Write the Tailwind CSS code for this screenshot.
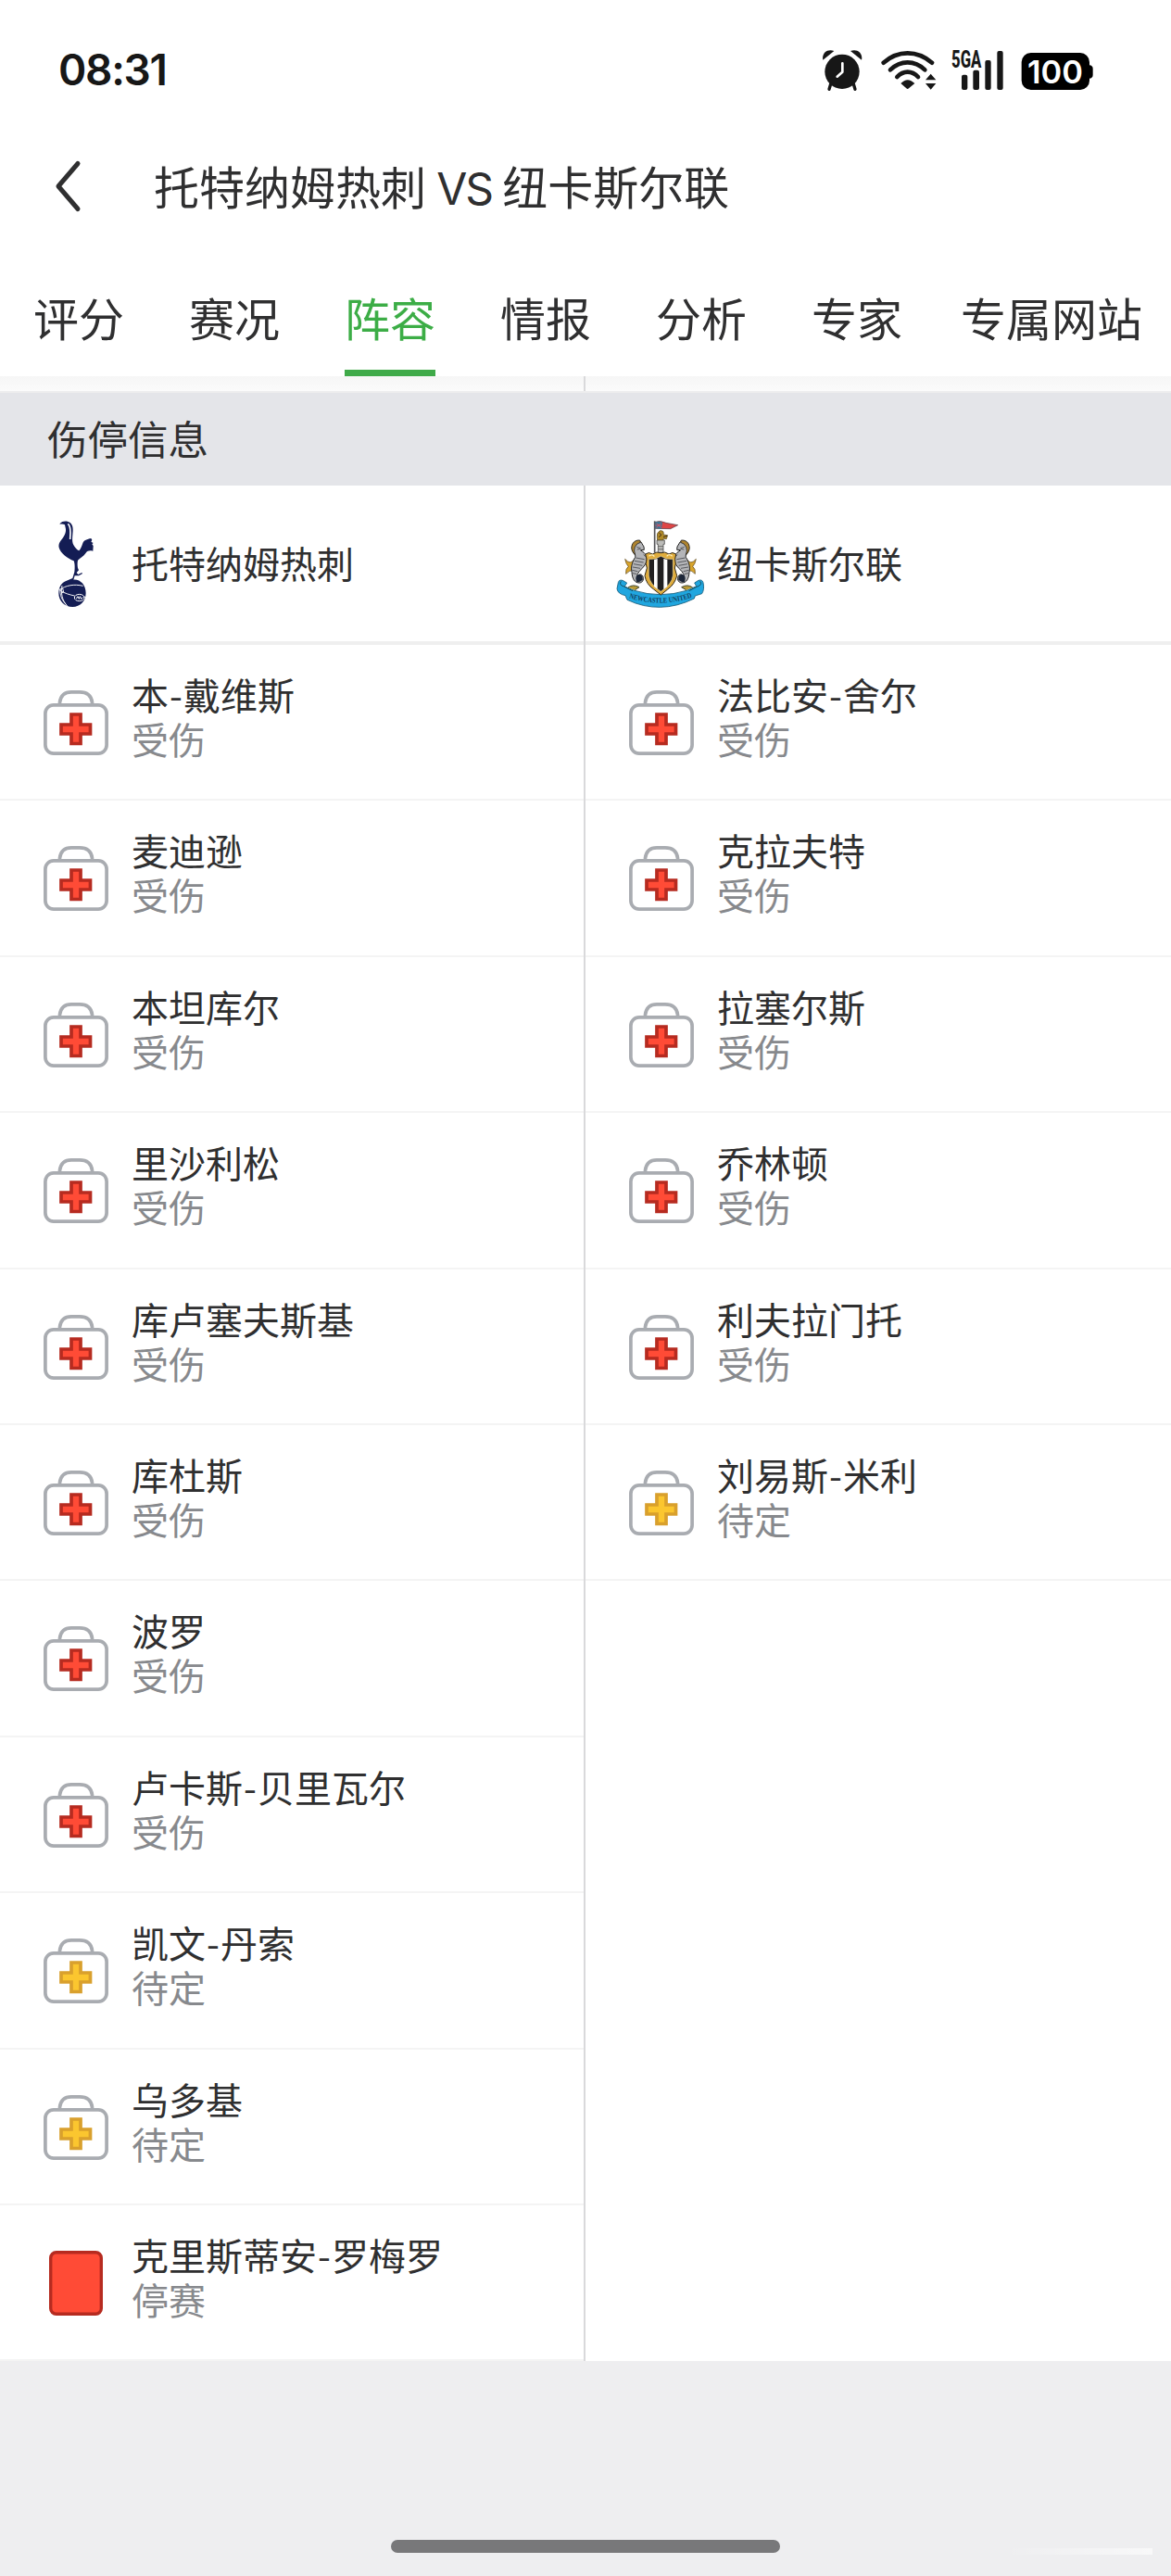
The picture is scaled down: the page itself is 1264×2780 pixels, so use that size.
<!DOCTYPE html>
<html lang="zh-CN">
<head>
  <meta charset="UTF-8" />
  <meta name="viewport" content="width=device-width, initial-scale=1.0"/>
  <title>托特纳姆热刺 VS 纽卡斯尔联</title>
  <script src="https://cdn.jsdelivr.net/npm/@tailwindcss/browser@4"></script>
</head>
<body class="bg-[#eeeef0] w-[1264px] h-[2780px] overflow-hidden flex flex-col text-[#2f2f30] font-['Noto_Sans_CJK_SC',sans-serif] font-normal">
  <!-- Phone status bar -->
  <div class="h-[150px] shrink-0 bg-white pl-[63px] pr-[84px] flex items-center justify-between text-[#171717]">
    <span class="font-[Inter,sans-serif] font-semibold text-[46px] leading-none tracking-[-1.300px]">08:31</span>
    <div class="flex items-center pt-[2px]">
      <!-- alarm -->
      <svg class="w-[44px] h-[46px]" viewBox="77 69 132 138" fill="currentColor">
        <circle cx="143" cy="142" r="56"/>
        <path d="M81 104C76 82 96 66 117 75Z"/><path d="M206 104C211 82 191 66 170 75Z"/>
        <path d="M106 182l-5 17M180 182l5 17" stroke="currentColor" stroke-width="10" stroke-linecap="round"/>
        <path d="M144 115V143L127 158" fill="none" stroke="#fff" stroke-width="8" stroke-linecap="round" stroke-linejoin="round"/>
      </svg>
      <!-- wifi -->
      <svg class="w-[60px] h-[46px] ml-[20px]" viewBox="269 69 180 138">
        <g fill="none" stroke="currentColor" stroke-width="14" stroke-linecap="round">
          <path d="M277 113Q312 82 355 82T434 113"/>
          <path d="M299 136Q324 112 355 112T411 136"/>
          <path d="M321 159Q336 143 355 143T389 159"/>
        </g>
        <path d="M333 180Q355 157 378 180L359 196Q355 200 351 196Z" fill="currentColor"/>
        <path d="M413 169L430 149L447 169ZM413 180L430 200L447 180Z" fill="currentColor"/>
      </svg>
      <!-- mobile signal -->
      <svg class="w-[58px] h-[46px] ml-[15px] overflow-visible" viewBox="494 69 174 138" fill="currentColor">
        <text x="497" y="128" textLength="97" lengthAdjust="spacingAndGlyphs" font-family="Roboto" font-weight="800" font-size="78">5GA</text>
        <rect x="530" y="152" width="19" height="49" rx="6"/>
        <rect x="567" y="137" width="20" height="64" rx="6"/>
        <rect x="606" y="105" width="19" height="96" rx="6"/>
        <rect x="645" y="75" width="19" height="126" rx="6"/>
      </svg>
      <!-- battery -->
      <svg class="w-[78px] h-[46px] ml-[18px]" viewBox="724 69 234 138">
        <rect x="726" y="81" width="220" height="120" rx="30" fill="#000"/>
        <path d="M945 121q12 1 12 12v19q0 11-12 12Z" fill="#000"/>
        <text x="745" y="181" textLength="180" lengthAdjust="spacingAndGlyphs" font-family="Inter" font-weight="600" font-size="104" fill="#fff">100</text>
      </svg>
    </div>
  </div>

  <!-- Match title -->
  <header class="h-[106px] shrink-0 bg-white flex items-center pl-[58px]">
    <svg class="w-[30px] h-[58px] -mt-[4px]" viewBox="0 0 30 58" fill="none" stroke="#2f2f30" stroke-width="5" stroke-linecap="round" stroke-linejoin="round">
      <path d="M26 4.500L5 29L26 53.500"/>
    </svg>
    <h1 class="ml-[78px] -mt-[2px] text-[49px] leading-[60px] whitespace-nowrap">托特纳姆热刺<span class="font-[Inter,sans-serif] text-[48px] tracking-[-2.200px]"> VS </span>纽卡斯尔联</h1>
  </header>

  <!-- Tabs -->
  <nav class="h-[150px] shrink-0 bg-white flex pl-[36px] pr-[31px] text-[49px] leading-[60px] whitespace-nowrap">
    <a class="mr-[70px] pt-[56px]">评分</a>
    <a class="mr-[70px] pt-[56px]">赛况</a>
    <a class="mr-[70px] pt-[56px] border-b-[7px] border-[#3faa49] text-[#3cad46]">阵容</a>
    <a class="mr-[70px] pt-[56px]">情报</a>
    <a class="mr-[70px] pt-[56px]">分析</a>
    <a class="mr-[63px] pt-[56px]">专家</a>
    <a class="pt-[56px]">专属网站</a>
  </nav>

  <!-- Strip between tabs and section title -->
  <div class="h-[18px] shrink-0 flex bg-linear-to-b from-[#f6f6f6] to-[#fbfbfb] border-b-2 border-[#ededee]">
    <div class="w-[632px] border-r-2 border-[#d9d9db]"></div>
  </div>
  <h2 class="h-[100px] shrink-0 bg-[#e4e5e9] pl-[51px] text-[43.500px] leading-[97px]">伤停信息</h2>

  <!-- Injuries and suspensions -->
  <main class="h-[2024px] shrink-0 bg-white flex text-[40px] leading-[48px]">
    <section class="w-[632px] border-r-2 border-[#d9d9db]">
      <div class="h-[172px] pl-[33px] flex items-center border-b-4 border-[#efefef]">
        <!-- Tottenham crest -->
        <svg class="w-[96px] h-[96px] mr-[13px] mt-[2px]" viewBox="9 63 288 288">
          <path fill="#141d54" d="M104 75C110 68 122 66 130 69C142 72 147 84 146 98C145 117 142 131 148 144C153 154 160 160 166 163C171 158 175 147 178 139C182 128 192 126 205 123L208 128L205 134L212 138L208 142L212 147L211 164C200 162 193 163 188 170C181 181 168 186 162 194C160 203 161 212 162 219L165 226L158 234L163 240L175 234L177 237L165 244H152L148 257C170 255 188 274 188 300C188 326 170 345 145 345C119 345 100 326 100 301C100 280 110 267 122 262L145 252L151 232C153 218 152 203 149 196C129 188 106 171 101 153C98 137 107 131 115 119C121 110 124 101 123 93L120 79C115 76 110 76 104 77Z"/>
          <path fill="none" stroke="#fff" stroke-width="5" d="M130 76C137 82 138 92 138 105L137 126"/>
          <path fill="none" stroke="#fff" stroke-width="2.800" d="M103 290C122 275 151 270 179 277M103 291C119 301 137 306 152 309M111 276C106 298 111 325 128 342M105 285C102 306 112 325 125 338M113 285L116 297L108 301M181 312L187 313"/>
          <ellipse cx="167" cy="315" rx="16" ry="11" fill="none" stroke="#fff" stroke-width="3"/>
          <path fill="none" stroke="#fff" stroke-width="3" d="M157 318L162 311L166 319L169 311L173 319L178 314"/>
        </svg>
        <span class="-mt-[3px]">托特纳姆热刺</span>
      </div>
      <ul id="home-list"></ul>
    </section>
    <section class="w-[632px]">
      <div class="h-[172px] pl-[33px] flex items-center border-b-4 border-[#efefef]">
        <!-- Newcastle crest -->
        <svg class="w-[96px] h-[96px] mr-[13px] mt-[2px]" viewBox="45 63 288 288">
          <defs>
            <path id="motto" d="M84 315Q188 350 297 312"/>
            <g id="seahorse">
              <path d="M104 190Q92 211 74 190Q77 207 85 214Q75 221 77 238Q88 225 103 227Z" fill="#d9a52c" stroke="#55401a" stroke-width="2"/>
              <path d="M126 135C109 124 95 139 97 158C98 169 110 173 107 184C98 198 92 215 96 232C97 253 105 268 121 267C133 266 137 252 130 243C124 236 114 241 115 250C108 241 122 228 133 216C148 200 147 179 135 169L124 161L136 160L135 150Z" fill="#b4b5b8" stroke="#262626" stroke-width="3"/>
              <path d="M122 129C102 127 91 145 97 163Q101 172 107 177Q101 161 106 151Q111 139 124 136Z" fill="#ae8430" stroke="#222" stroke-width="2.500"/>
              <path d="M112 151l13 4M113 159l10-2M109 186l28 5M105 196l29 5M102 206l28 5M99 216l24 4M97 226l18 4M98 236l13 2M134 176l10 8" stroke="#45464a" stroke-width="2.500" fill="none"/>
              <path d="M109 254Q108 241 121 239Q133 243 131 256Q123 269 111 263Z" fill="#1c2638"/>
            </g>
          </defs>
          <path d="M52 266Q54 256 66 259L80 267L73 279L105 292Q188 318 273 292L305 278L299 267L312 259Q324 255 327 266Q332 288 323 302L301 309L298 318Q187 372 81 322L75 308Q50 303 48 286Z" fill="#20a6df" stroke="#175c79" stroke-width="2.500"/>
          <path d="M61 262Q53 274 71 279L99 293M317 262Q326 274 306 280L281 293" fill="none" stroke="#164e60" stroke-width="3"/>
          <path d="M84 282Q100 270 120 281L106 290M293 282Q276 270 257 281L272 290" fill="#b99a35" stroke="#3d422b" stroke-width="3"/>
          <path d="M170 67V170" stroke="#535358" stroke-width="5"/>
          <path d="M172 70Q188 64 207 73L245 80Q231 87 221 92L172 91Z" fill="#df4545" stroke="#4b3440" stroke-width="2"/>
          <path d="M172 70Q184 66 195 71L192 92L172 91Z" fill="#377895"/>
          <path d="M176 73l15 16M190 73l-14 16M172 81h21" stroke="#ce5266" stroke-width="3"/>
          <path d="M178 119Q175 106 187 98Q202 97 198 111L212 113L208 125L199 124L197 130H179Z" fill="#b18b28" stroke="#4f401c" stroke-width="2"/>
          <path d="M184 105l8 7-9 7M198 119l12-4" stroke="#412c17" stroke-width="3" fill="none"/>
          <path d="M177 129h25v13h-4v28h-17v-28h-4Z" fill="#bcbcb9" stroke="#343434" stroke-width="2"/>
          <path d="M181 149h17M181 158h17" stroke="#444" stroke-width="2"/>
          <use href="#seahorse"/>
          <use href="#seahorse" transform="matrix(-1 0 0 1 378 0)"/>
          <path d="M140 174Q151 165 163 174Q177 164 190 170Q203 164 216 174Q228 165 239 174L236 190Q240 207 235 219L242 244Q235 272 212 288L190 306L167 288Q143 272 138 244L145 219Q139 206 144 190Z" fill="#e0ad3d" stroke="#31291c" stroke-width="3"/>
          <path d="M151 190Q173 193 190 181Q209 193 229 190V243Q226 271 190 295Q153 271 151 243Z" fill="#211f20" stroke="#fff2c2" stroke-width="1.500"/>
          <path d="M168 192L179 189V287L168 279ZM199 189L211 192V279L199 288Z" fill="#fff"/>
          <path d="M151 181q12-9 18 1M209 181q8-10 18 0" fill="none" stroke="#fff1bd" stroke-width="4"/>
          <text font-family="Liberation Serif" font-size="24" font-weight="700" fill="#12405d"><textPath href="#motto" textLength="208" lengthAdjust="spacingAndGlyphs" startOffset="3">NEWCASTLE UNITED</textPath></text>
        </svg>
        <span class="-mt-[3px]">纽卡斯尔联</span>
      </div>
      <ul id="away-list"></ul>
    </section>
  </main>

  <!-- Bottom gesture area -->
  <footer class="flex-1 flex flex-col items-center justify-end pb-[25px] relative">
    <div class="w-[420px] h-[14px] rounded-full bg-[#78787a]"></div>
    <div class="absolute right-[20px] bottom-[23px] w-[160px] h-[7px] bg-linear-to-r from-white/0 to-white/60"></div>
  </footer>

  <script>
    const home = [
      ['本-戴维斯', '受伤'], ['麦迪逊', '受伤'], ['本坦库尔', '受伤'], ['里沙利松', '受伤'],
      ['库卢塞夫斯基', '受伤'], ['库杜斯', '受伤'], ['波罗', '受伤'], ['卢卡斯-贝里瓦尔', '受伤'],
      ['凯文-丹索', '待定'], ['乌多基', '待定'], ['克里斯蒂安-罗梅罗', '停赛']
    ];
    const away = [
      ['法比安-舍尔', '受伤'], ['克拉夫特', '受伤'], ['拉塞尔斯', '受伤'],
      ['乔林顿', '受伤'], ['利夫拉门托', '受伤'], ['刘易斯-米利', '待定']
    ];

    // First-aid kit, red for injured and yellow for doubtful
    function kit(fill, stroke) {
      return `
        <svg class="w-[70px] h-[70px]" viewBox="0 0 70 70" fill="none">
          <path d="M17.500 15V13Q19 1.900 30 1.900H39Q51 1.900 52.500 13V15" stroke="#a9acb1" stroke-width="3.700"/>
          <rect x="1.900" y="15.900" width="66.200" height="52.200" rx="9" stroke="#a9acb1" stroke-width="3.700"/>
          <path d="M30 26H40V37H50.500V47H40V57.500H30V47H19V37H30Z" fill="${fill}" stroke="${stroke}" stroke-width="3.700"/>
        </svg>`;
    }

    const icons = {
      '受伤': kit('#ff4b36', '#b62b20'),
      '待定': kit('#fbc62f', '#d9a02d'),
      '停赛': `
        <svg class="w-[58px] h-[70px]" viewBox="0 0 58 70">
          <rect x="1.700" y="1.700" width="54.600" height="66.600" rx="6" fill="#ff4b36" stroke="#b62b20" stroke-width="3.400"/>
        </svg>`
    };

    function render(id, players) {
      document.getElementById(id).innerHTML = players.map(([name, status]) => `
        <li class="h-[168.400px] pl-[33px] flex border-b-2 border-[#f4f4f4]">
          <div class="w-[98px] mr-[11px] pt-[49px] flex justify-center items-start">${icons[status]}</div>
          <div class="pt-[29px]">
            <p>${name.replace('-', '<span class="px-[1px]">-</span>')}</p>
            <p class="text-[#87898d]">${status}</p>
          </div>
        </li>
      `).join('');
    }

    render('home-list', home);
    render('away-list', away);
  </script>
</body>
</html>
